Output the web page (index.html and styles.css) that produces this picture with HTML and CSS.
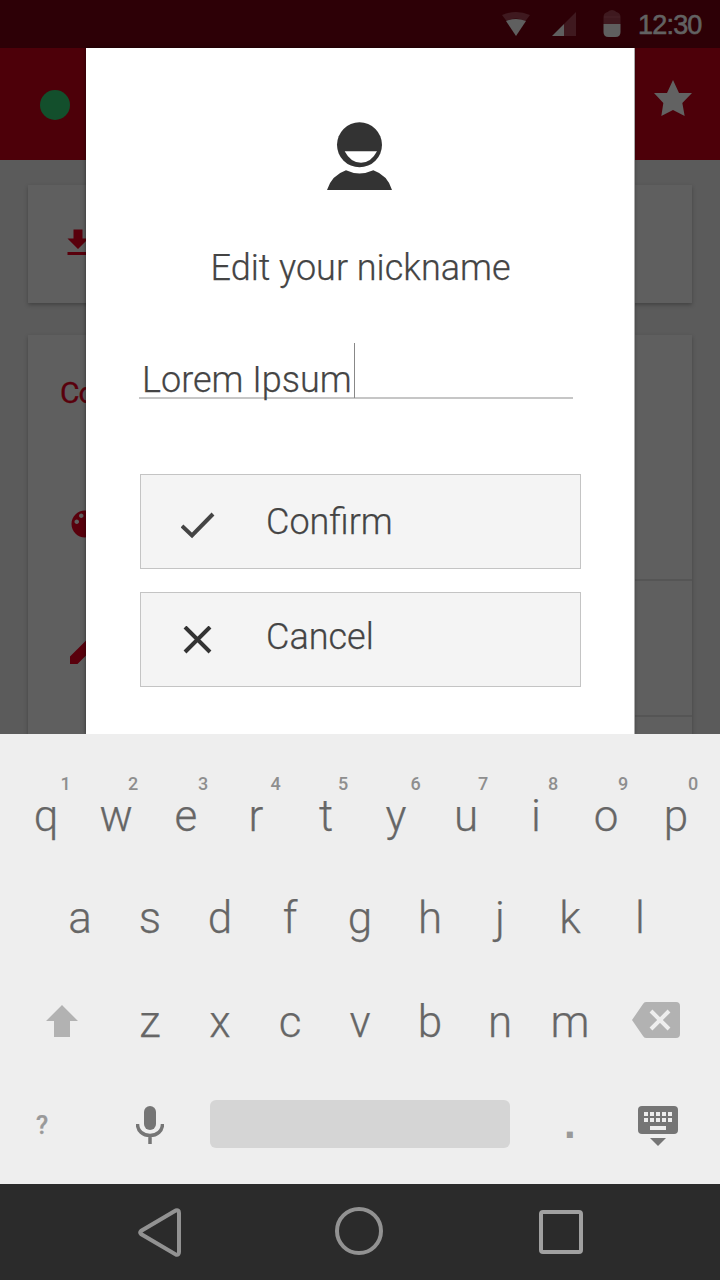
FILE: index.html
```html
<!DOCTYPE html>
<html lang="en">
<head>
<meta charset="utf-8">
<title>Edit your nickname</title>
<link rel="stylesheet" href="styles.css">
</head>
<body>
<div class="phone">
  <div class="app">
    <div class="status">
      <svg class="wifi" width="30" height="26" viewBox="0 0 30 26"><path d="M1 5Q15-1 29 5L24.500 11Q15 6 5.500 11Z" fill="#3f191f"/><path d="M5 11Q15 7 25 11L15 26Z" fill="#5f5f5f"/></svg>
      <svg class="signal" width="24" height="24" viewBox="0 0 24 24"><path d="M12 12L24 0V24H12Z" fill="#3f191f"/><path d="M0 24L12 12V24Z" fill="#5f5f5f"/></svg>
      <svg class="battery" width="18" height="27" viewBox="0 0 18 27"><path d="M.5 14V7Q.5 3 4.500 2Q9-2 13.500 2Q17.500 3 17.500 7V14Z" fill="#3f191f"/><path d="M1 7H17" stroke="#4b262c" stroke-width=".7"/><path d="M.5 14H17.500V22Q17.500 27 12.500 27H5.500Q.5 27 .5 22Z" fill="#5f5f5f"/></svg>
      <span class="clock">12:30</span>
    </div>
    <div class="header">
      <span class="online"></span>
      <svg class="star" width="38" height="37" viewBox="521 240 114 111" fill="#626262"><path d="M578 240L596 279H635L606 309L613 348L578 330L543 348L549 309L521 279H560Z"/></svg>
    </div>
    <div class="card card-download">
      <svg width="36" height="36" viewBox="0 0 24 24"><path d="M19 9h-4V3H9v6H5l7 7 7-7zM5 18v2h14v-2z"/></svg>
    </div>
    <div class="card card-list">
      <div class="row row-palette">
        <div class="card-title">Co</div>
        <svg class="palette" width="36" height="36" viewBox="0 0 24 24"><path d="M12 3c-4.970 0-9 4.030-9 9s4.030 9 9 9c.83 0 1.500-.67 1.500-1.500 0-.39-.15-.74-.39-1.010-.23-.26-.38-.61-.38-.99 0-.83.67-1.500 1.500-1.500H16c2.760 0 5-2.240 5-5 0-4.420-4.030-8-9-8zm-5.500 9c-.83 0-1.500-.67-1.500-1.500S5.670 9 6.500 9 8 9.670 8 10.500 7.330 12 6.500 12zm3-4C8.670 8 8 7.330 8 6.500S8.670 5 9.500 5s1.500.67 1.500 1.500S10.330 8 9.500 8z"/></svg>
      </div>
      <div class="row row-edit">
        <svg width="48" height="48" viewBox="0 0 24 24"><path d="M3 17.250V21h3.750L17.810 9.940l-3.750-3.750z"/></svg>
      </div>
    </div>
    <div class="dialog">
      <svg class="avatar" width="65" height="68" viewBox="81 66 195 204"><circle cx="178.500" cy="134.500" r="67.500" fill="#333"/><path d="M134 154H231Q213 188.500 183 188.500Q152 188.500 134 154Z" fill="#fff"/><path d="M81 270Q95 226 138 211Q178 230 220 211Q263 226 276 270Z" fill="#333"/></svg>
      <h1 class="title">Edit your nickname</h1>
      <div class="field"><span>Lorem Ipsum</span><i class="caret"></i></div>
      <div class="button confirm">
        <svg width="34" height="28" viewBox="0 0 34 28" fill="none" stroke="#444" stroke-width="4"><path d="M1 14L11 23.500L32 2"/></svg>
        <span>Confirm</span>
      </div>
      <div class="button cancel">
        <svg width="34" height="28" viewBox="0 0 34 28" fill="none" stroke="#333" stroke-width="4"><path d="M4 1L29 26M29 1L4 26"/></svg>
        <span>Cancel</span>
      </div>
    </div>
  </div>

  <div class="keyboard">
    <div class="keys numbers"><b class="wide">1</b><b>2</b><b>3</b><b class="wide">4</b><b>5</b><b class="wide">6</b><b>7</b><b>8</b><b>9</b><b>0</b></div>
    <div class="keys top"><span>q</span><span>w</span><span>e</span><span>r</span><span>t</span><span>y</span><span>u</span><span>i</span><span>o</span><span>p</span></div>
    <div class="keys home"><span>a</span><span>s</span><span>d</span><span>f</span><span>g</span><span>h</span><span>j</span><span>k</span><span>l</span></div>
    <div class="bottom">
      <svg class="shift" width="32" height="32" viewBox="0 0 32 32"><path d="M16 0L32 16H24V32H8V16H0Z" fill="#b2b2b2"/></svg>
      <div class="keys"><span>z</span><span>x</span><span>c</span><span>v</span><span>b</span><span>n</span><span>m</span></div>
      <svg class="delete" width="48" height="36" viewBox="0 0 48 36"><path d="M14 0H44Q48 0 48 4V32Q48 36 44 36H14Q12 36 11 34L0 18L11 2Q12 0 14 0Z" fill="#b2b2b2"/><path d="M19 9L37 27M37 9L19 27" stroke="#eee" stroke-width="4"/></svg>
    </div>
    <div class="controls">
      <b class="symbols">?</b>
      <svg class="mic" width="28" height="38" viewBox="0 0 28 38"><rect x="8" width="12" height="24" rx="6" fill="#757575"/><path d="M1.500 18C1.500 25 7 29.500 14 29.500S26.500 25 26.500 18M14 29V38" fill="none" stroke="#757575" stroke-width="3.500"/></svg>
      <span class="space"></span>
      <b class="period">.</b>
      <svg class="hide" width="40" height="40" viewBox="0 0 40 40"><rect width="40" height="28" rx="4" fill="#757575"/><path d="M6 8H34M6 14H34" stroke="#eee" stroke-width="4" stroke-dasharray="4 2"/><path d="M12 22H28" stroke="#eee" stroke-width="4"/><path d="M12 32H28L20 40Z" fill="#757575"/></svg>
    </div>
  </div>

  <div class="nav">
    <svg class="back" width="43" height="49" viewBox="0 0 43 49"><path d="M37.700 2.500L3 23Q1.300 24.500 3 26L37.700 46.500Q41 47.500 41 44V5Q41 1.500 37.700 2.500Z" fill="none" stroke="#929292" stroke-width="4"/></svg>
    <span class="home-button"></span>
    <span class="recent"></span>
  </div>
</div>
</body>
</html>
```
FILE: styles.css
```css
* { box-sizing: border-box; }
body { margin: 0; font-family: Roboto, "Liberation Sans", sans-serif; }
svg { display: block; flex: none; }
.phone { width: 720px; height: 1280px; overflow: hidden; display: flex; flex-direction: column; }

.app { position: relative; height: 734px; flex: none; overflow: hidden; background: #5b5b5b; }
.status { height: 48px; background: #2d0006; display: flex; justify-content: flex-end; padding: 10px 18px 0 0; }
.wifi { margin-right: 21px; }
.signal { margin: 2px 27px 0 0; }
.battery { margin-right: 17px; }
.clock { width: 64px; font: 27px/30px "Liberation Sans", Arial, sans-serif; letter-spacing: -.8px; color: #626262; -webkit-text-stroke: .6px #626262; white-space: nowrap; }
.header { height: 112px; background: #4d0009; display: flex; justify-content: space-between; padding: 32px 28.5px 0 40px; }
.online { width: 30px; height: 30px; margin-top: 10px; border-radius: 50%; background: #134f2c; }
.card { margin: 0 28px; background: #5f5f5f; box-shadow: 0 2px 4px #0004; }
.card svg { fill: #59000c; }
.card-download { height: 118px; margin-top: 25px; padding: 40px 0 0 32px; }
.card-list { height: 430px; margin-top: 32px; }
.row { height: 136px; background: linear-gradient(#555, #555) right bottom / 400px 2px no-repeat; }
.row-palette { height: 246px; padding-top: 40px; }
.card-title { margin-left: 32px; font-size: 30px; line-height: 36px; letter-spacing: -1px; color: #59000c; -webkit-text-stroke: .3px #59000c; }
.palette { margin: 95px 0 0 39px; }
.row-edit { padding: 41px 0 0 36px; }

.dialog { position: absolute; left: 86px; top: 48px; width: 548px; height: 686px; padding: 74px 53px 0 54px; background: #fff; box-shadow: 1px 0 0 #aaa, 0 0 4px #0008; color: #444; font-weight: 300; font-size: 36px; -webkit-text-stroke: .25px #444; }
.avatar { margin-left: 187px; }
.title { margin: 56px 0 0; text-align: center; font-size: 36px; font-weight: 300; line-height: 44px; }
.field { display: flex; align-items: flex-end; width: 434px; height: 56px; margin: 53px 0 75px -1px; padding-left: 3px; border-bottom: 2px solid #c6c6c6; line-height: 34px; white-space: nowrap; }
.caret { width: 1px; height: 55px; margin: 0 0 -1px 2px; background: #888; }
.button { height: 95px; display: flex; border: 1px solid #c4c4c4; background: #f4f4f4; line-height: 44px; padding: 25px 0 0 40px; }
.button svg { margin: 12px 51px 0 0; }
.confirm { margin-bottom: 23px; }
.cancel { padding-top: 22px; }
.cancel svg { margin-top: 11px; }

.keyboard { height: 450px; flex: none; background: #eee; color: #666; font-size: 44px; font-weight: 300; line-height: 54px; padding-top: 40px; -webkit-text-stroke: .25px currentColor; }
.keys { display: grid; grid-auto-flow: column; grid-auto-columns: 70px; text-align: center; }
.numbers { height: 20px; padding-left: 28px; color: #8e8e8e; font-size: 18px; line-height: 20px; -webkit-text-stroke: 0; }
.numbers b, .symbols { font-weight: 500; }
.wide { padding-left: 5px; }
.top { padding-left: 11px; line-height: 44px; }
.home { padding-left: 45px; margin-top: 53px; }
.bottom { display: flex; margin-top: 50px; height: 54px; }
.bottom .keys { margin-left: -1px; }
.shift { margin: 10px 38px 0 46px; }
.delete { margin: 7px 0 0 27px; }
.controls { display: flex; align-items: flex-start; margin-top: 51px; color: #999; }
.symbols { width: 100px; padding-left: 36px; font-size: 25px; line-height: 52px; }
.mic { margin: 6px 46px 0 36px; }
.space { width: 300px; height: 48px; border-radius: 6px; background: #d5d5d5; }
.period { width: 128px; padding-left: 54px; font: bold 42px/48px "Liberation Sans", Arial, sans-serif; -webkit-text-stroke: 0; }
.hide { margin-top: 6px; }

.nav { height: 96px; flex: none; display: flex; background: #2b2b2b; padding: 23px 0 0 138px; }
.back { margin: 1px 154px 0 0; }
.home-button { width: 48px; height: 48px; border: 4px solid #929292; border-radius: 50%; margin-right: 156px; }
.recent { width: 44px; height: 44px; margin-top: 3px; border: 4px solid #a0a0a0; border-radius: 4px; }
```
